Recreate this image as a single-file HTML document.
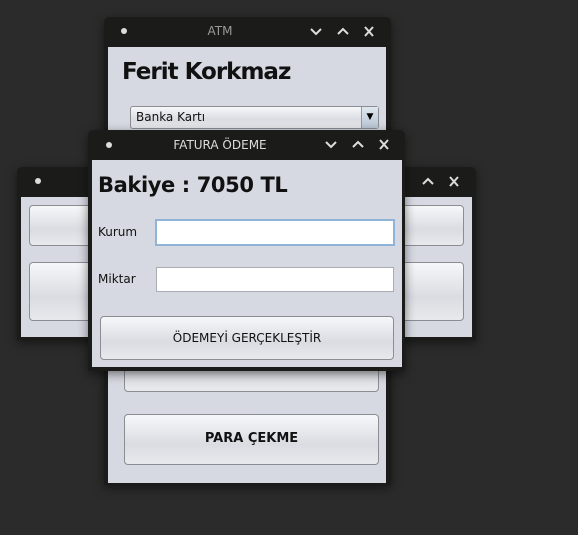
<!DOCTYPE html>
<html><head><meta charset="utf-8"><style>
body{margin:0;width:578px;height:535px;background:#2b2b2b;position:relative;overflow:hidden;font-family:"DejaVu Sans","Liberation Sans",sans-serif}
.a{position:absolute;box-sizing:border-box}
.win{background:#1b1c1a;border-radius:5px 5px 0 0;box-shadow:0 3px 10px rgba(0,0,0,.5)}
.ct{background:#d6d9e1}
.dot{width:6px;height:6px;border-radius:50%;background:#ddd}
.ttl{color:#ddd;font-size:12px;text-align:center}
.btn{border:1px solid #8a8d92;border-radius:4px;background:linear-gradient(#f6f7f9,#dadce2 60%,#e8e9ec);}
.inp{background:#fff;border:1px solid #a9adb3}
svg{position:absolute}
</style></head><body>
<div class="a win" style="left:104px;top:17px;width:287px;height:468px"></div>
<div class="a dot" style="left:121px;top:28px"></div>
<div class="a ttl" style="left:104px;top:24px;width:232px;color:#999">ATM</div>
<svg style="left:308px;top:26px" width="72" height="12" viewBox="0 0 72 12"><g stroke="#ddd" stroke-width="2" fill="none"><path d="M3 3l5 5 5-5"/><path d="M30 8l5-5 5 5"/><path d="M57 1l8 9M65 1l-8 9"/></g></svg>
<div class="a ct" style="left:108px;top:47px;width:278px;height:436px"></div>
<div class="a" style="left:122px;top:59px;font-size:23px;font-weight:bold;color:#111;letter-spacing:-1px">Ferit Korkmaz</div>
<div class="a btn" style="left:130px;top:106px;width:249px;height:23px;border-radius:3px"></div>
<div class="a" style="left:136px;top:110px;font-size:12px;color:#111">Banka Kartı</div>
<div class="a" style="left:361px;top:107px;width:17px;height:21px;background:linear-gradient(#dfe6ee,#b9c6d4);border-left:1px solid #999;font-size:9px;text-align:center;line-height:21px">▼</div>
<div class="a btn" style="left:124px;top:340px;width:255px;height:52px"></div>
<div class="a btn" style="left:124px;top:414px;width:255px;height:51px"></div>
<div class="a" style="left:124px;top:431px;width:255px;text-align:center;font-size:13px;font-weight:bold;color:#111">PARA ÇEKME</div>
<div class="a win" style="left:17px;top:167px;width:459px;height:173px"></div>
<div class="a dot" style="left:35px;top:178px"></div>
<svg style="left:420px;top:176px" width="45" height="12" viewBox="0 0 45 12"><g stroke="#ddd" stroke-width="2" fill="none"><path d="M3 8l5-5 5 5"/><path d="M30 1l8 9M38 1l-8 9"/></g></svg>
<div class="a ct" style="left:21px;top:197px;width:451px;height:140px"></div>
<div class="a btn" style="left:29px;top:205px;width:435px;height:41px"></div>
<div class="a btn" style="left:29px;top:262px;width:435px;height:59px"></div>
<div class="a win" style="left:88px;top:130px;width:317px;height:241px"></div>
<div class="a dot" style="left:106px;top:142px"></div>
<div class="a ttl" style="left:88px;top:138px;width:264px">FATURA ÖDEME</div>
<svg style="left:323px;top:139px" width="72" height="12" viewBox="0 0 72 12"><g stroke="#ddd" stroke-width="2" fill="none"><path d="M3 3l5 5 5-5"/><path d="M30 8l5-5 5 5"/><path d="M57 1l8 9M65 1l-8 9"/></g></svg>
<div class="a ct" style="left:92px;top:160px;width:310px;height:207px"></div>
<div class="a" style="left:98px;top:173px;font-size:21px;font-weight:bold;color:#111;letter-spacing:-0.4px">Bakiye : 7050 TL</div>
<div class="a" style="left:98px;top:225px;font-size:12px;color:#111">Kurum</div>
<div class="a inp" style="left:155px;top:219px;width:240px;height:27px;border:2px solid #8fb4d8"></div>
<div class="a" style="left:98px;top:272px;font-size:12px;color:#111">Miktar</div>
<div class="a inp" style="left:156px;top:267px;width:238px;height:25px"></div>
<div class="a btn" style="left:100px;top:316px;width:294px;height:44px"></div>
<div class="a" style="left:100px;top:331px;width:294px;text-align:center;font-size:12px;color:#111">ÖDEMEYİ GERÇEKLEŞTİR</div>
</body></html>
